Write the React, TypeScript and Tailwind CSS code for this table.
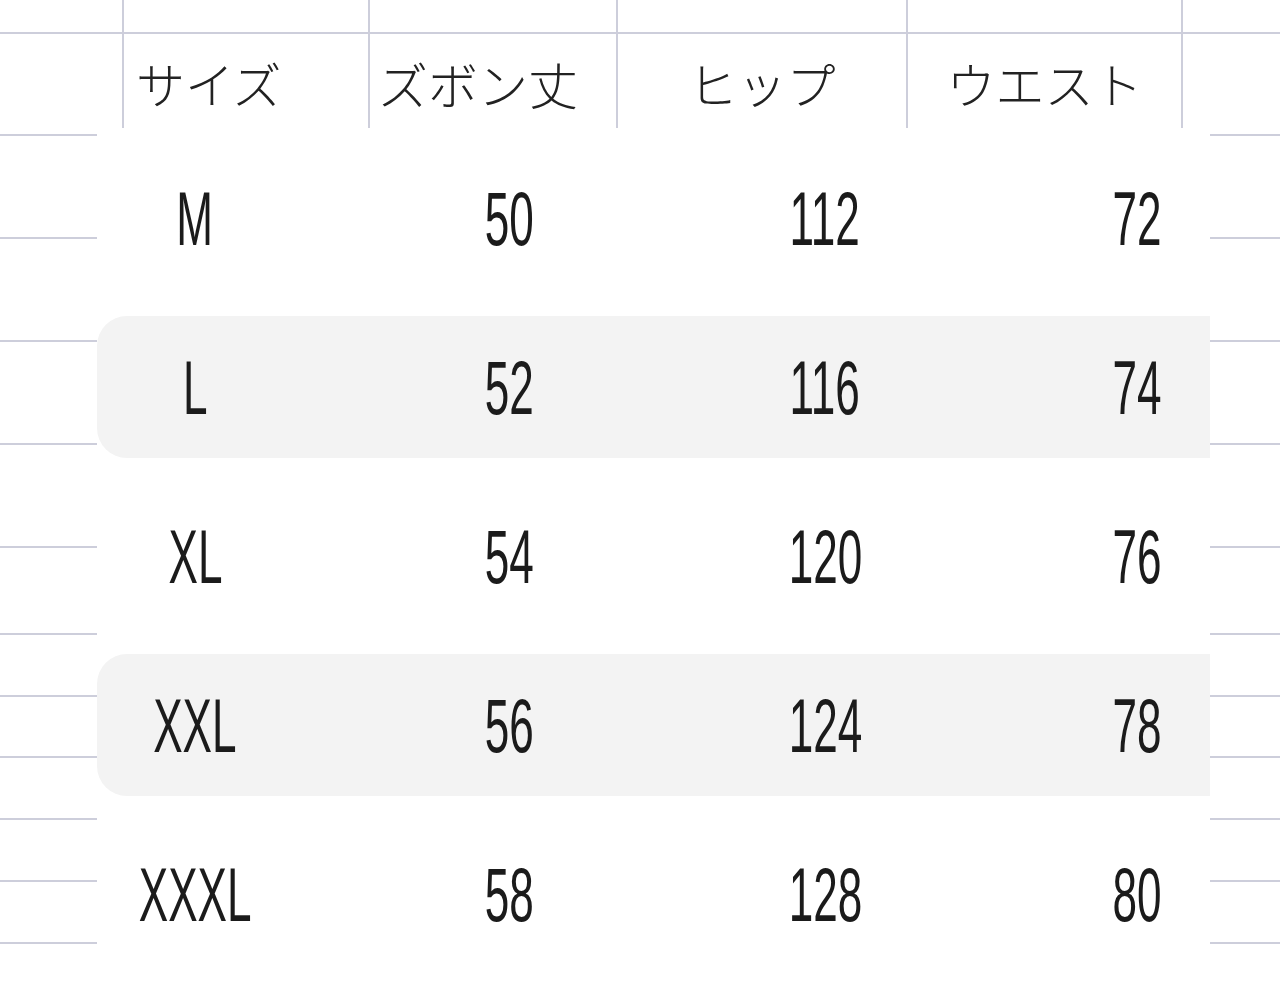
const rows = [
  { size: 'M', length: '50', hip: '112', waist: '72', shaded: false },
  { size: 'L', length: '52', hip: '116', waist: '74', shaded: true },
  { size: 'XL', length: '54', hip: '120', waist: '76', shaded: false },
  { size: 'XXL', length: '56', hip: '124', waist: '78', shaded: true },
  { size: 'XXXL', length: '58', hip: '128', waist: '80', shaded: false },
];

// grid lines peeking out on both sides of the sheet
function Gutter({ className }: { className: string }) {
  return (
    <div className={`flex flex-col ${className}`}>
      <div className="h-[8px] border-b-2 border-[#cdcedb]" />
      <div className="h-[103px] border-b-2 border-[#cdcedb]" />
      <div className="h-[103px] border-b-2 border-[#cdcedb]" />
      <div className="h-[103px] border-b-2 border-[#cdcedb]" />
      <div className="h-[103px] border-b-2 border-[#cdcedb]" />
      <div className="h-[87px] border-b-2 border-[#cdcedb]" />
      <div className="h-[62px] border-b-2 border-[#cdcedb]" />
      <div className="h-[61px] border-b-2 border-[#cdcedb]" />
      <div className="h-[62px] border-b-2 border-[#cdcedb]" />
      <div className="h-[62px] border-b-2 border-[#cdcedb]" />
      <div className="h-[62px] border-b-2 border-[#cdcedb]" />
    </div>
  );
}

function Num({ children, right }: { children: string; right?: boolean }) {
  return (
    <span
      className={`inline-block scale-x-[0.58] text-[76px] leading-none text-[#1b1b1b] ${
        right ? 'origin-right' : 'origin-center'
      }`}
    >
      {children}
    </span>
  );
}

export default function App() {
  return (
    <div
      className="w-[1280px] h-[1000px] overflow-hidden bg-white"
      style={{ fontFamily: '"Liberation Sans", "Noto Sans CJK JP", sans-serif' }}
    >
      {/* header cells */}
      <div className="flex h-[128px]">
        <div className="w-[124px] border-r-2 border-[#cdcedb] flex flex-col">
          <div className="h-[34px] border-b-2 border-[#cdcedb]" />
        </div>
        <div className="w-[246px] border-r-2 border-[#cdcedb] flex flex-col">
          <div className="h-[34px] border-b-2 border-[#cdcedb]" />
          <div className="flex-1 flex items-center pl-[12px] pt-[4px] text-[49px] font-light text-[#222]" style={{ fontFamily: '"Noto Sans CJK JP", sans-serif' }}>
            サイズ
          </div>
        </div>
        <div className="w-[248px] border-r-2 border-[#cdcedb] flex flex-col">
          <div className="h-[34px] border-b-2 border-[#cdcedb]" />
          <div className="flex-1 flex items-center pl-[8px] pt-[4px] text-[50px] font-light text-[#222]" style={{ fontFamily: '"Noto Sans CJK JP", sans-serif' }}>
            ズボン丈
          </div>
        </div>
        <div className="w-[290px] border-r-2 border-[#cdcedb] flex flex-col">
          <div className="h-[34px] border-b-2 border-[#cdcedb]" />
          <div className="flex-1 flex items-center justify-center pt-[4px] text-[49px] font-light text-[#222]" style={{ fontFamily: '"Noto Sans CJK JP", sans-serif' }}>
            ヒップ
          </div>
        </div>
        <div className="w-[275px] border-r-2 border-[#cdcedb] flex flex-col">
          <div className="h-[34px] border-b-2 border-[#cdcedb]" />
          <div className="flex-1 flex items-center justify-center pt-[4px] text-[49px] font-light text-[#222]" style={{ fontFamily: '"Noto Sans CJK JP", sans-serif' }}>
            ウエスト
          </div>
        </div>
        <div className="flex-1 flex flex-col">
          <div className="h-[34px] border-b-2 border-[#cdcedb]" />
        </div>
      </div>

      {/* body */}
      <div className="flex h-[872px]">
        <Gutter className="w-[97px]" />
        <div className="flex-1 bg-white flex flex-col pt-[19px] gap-[27px]">
          {rows.map((r) => (
            <div
              key={r.size}
              className={`h-[142px] grid grid-cols-[196px_432px_200px_1fr] items-center pt-[1px] ${
                r.shaded ? 'bg-[#f3f3f3] rounded-l-[30px]' : ''
              }`}
            >
              <div className="text-center">
                <Num>{r.size}</Num>
              </div>
              <div className="text-center">
                <Num>{r.length}</Num>
              </div>
              <div className="text-center">
                <Num>{r.hip}</Num>
              </div>
              <div className="text-right pr-[48px]">
                <Num right>{r.waist}</Num>
              </div>
            </div>
          ))}
        </div>
        <Gutter className="w-[70px]" />
      </div>
    </div>
  );
}
